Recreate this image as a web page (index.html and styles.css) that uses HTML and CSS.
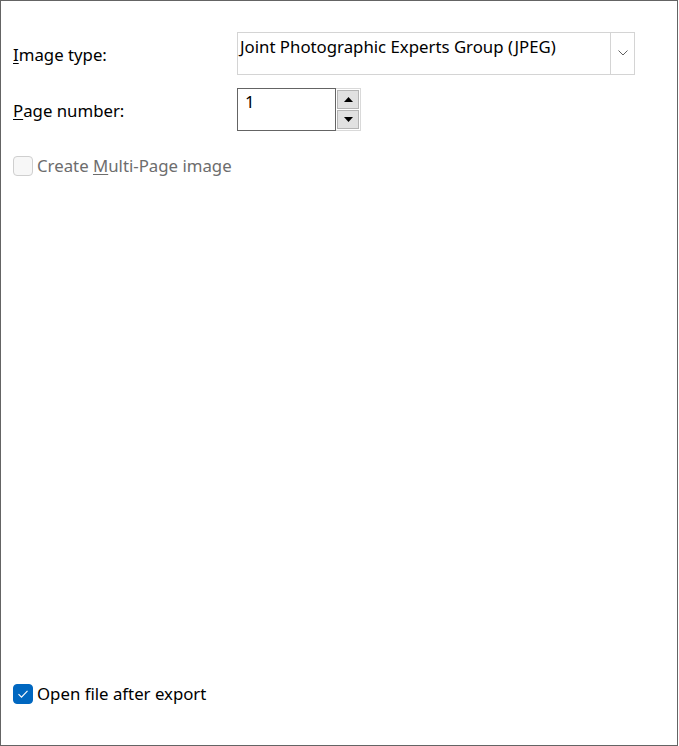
FILE: index.html
```
<!DOCTYPE html>
<html>
<head>
<meta charset="utf-8">
<link rel="stylesheet" href="styles.css">
</head>
<body>
<div class="dialog">
  <div class="form">
    <label class="lbl lbl-type"><u>I</u>mage type:</label>
    <div class="combo">
      <span class="combo-text">Joint Photographic Experts Group (JPEG)</span>
      <span class="combo-btn">
        <svg width="10" height="6" viewBox="0 0 10 6"><path d="M0.5 0.5 L5 5 L9.5 0.5" fill="none" stroke="#606060" stroke-width="1"/></svg>
      </span>
    </div>
    <label class="lbl lbl-page"><u>P</u>age number:</label>
    <div class="spin">
      <div class="spin-input">1</div>
      <div class="spin-btns">
        <div class="spin-btn"><svg width="9" height="5" viewBox="0 0 9 5"><path d="M0 5 L4.5 0 L9 5 Z" fill="#000"/></svg></div>
        <div class="spin-btn"><svg width="9" height="5" viewBox="0 0 9 5"><path d="M0 0 L4.5 5 L9 0 Z" fill="#000"/></svg></div>
      </div>
    </div>
  </div>
  <label class="check disabled"><span class="box"></span><span>Create <u>M</u>ulti-Page image</span></label>
  <div class="spacer"></div>
  <label class="check"><span class="box checked"><svg width="12" height="10" viewBox="0 0 12 10"><path d="M1.5 5.2 L4.5 8.2 L10.5 1.8" fill="none" stroke="#fff" stroke-width="1.1"/></svg></span><span>Open file after export</span></label>
</div>
</body>
</html>
```
FILE: styles.css
```
html, body {
  margin: 0;
  padding: 0;
  background: #fff;
}
body {
  font-family: "Noto Sans", "Open Sans", sans-serif;
  font-size: 16.8px;
  color: #000;
}
.dialog {
  box-sizing: border-box;
  width: 678px;
  height: 746px;
  border: 1px solid #646464;
  padding: 31px 0 0 12px;
  display: flex;
  flex-direction: column;
}
.form {
  display: grid;
  grid-template-columns: 224px 398px;
  grid-auto-rows: 43px;
  row-gap: 13px;
}
.lbl {
  line-height: 22px;
  padding-top: 12px;
}
.lbl u, .check u { text-decoration-thickness: 1px; text-underline-offset: 2px; }
.combo {
  box-sizing: border-box;
  display: flex;
  border: 1px solid #d4d4d4;
  background: #fff;
}
.combo-text {
  flex: 1;
  padding: 3px 0 0 2px;
  line-height: 22px;
  white-space: nowrap;
}
.combo-btn {
  box-sizing: border-box;
  width: 24px;
  border-left: 1px solid #d4d4d4;
  display: flex;
  align-items: center;
  justify-content: center;
  padding-bottom: 2px;
}
.spin {
  display: flex;
  width: 124px;
}
.spin-input {
  box-sizing: border-box;
  width: 99px;
  border: 1px solid #646464;
  padding: 2px 0 0 7px;
  line-height: 22px;
}
.spin-btns {
  box-sizing: border-box;
  width: 25px;
  border: 1px solid #d9d9d9;
  border-left: none;
  padding: 1px;
  display: flex;
  flex-direction: column;
  gap: 1px;
}
.spin-btn {
  flex: 1;
  box-sizing: border-box;
  background: #e1e1e1;
  border: 1px solid #b4b4b4;
  display: flex;
  align-items: center;
  justify-content: center;
}
.check {
  display: flex;
  align-items: center;
  gap: 4px;
  line-height: 20px;
}
.check.disabled {
  margin-top: 25px;
  color: #6d6d6d;
}
.box {
  box-sizing: border-box;
  width: 20px;
  height: 20px;
  border-radius: 4px;
  border: 1px solid #cfcfcf;
  background: #f7f7f7;
  display: flex;
  align-items: center;
  justify-content: center;
}
.box.checked {
  background: #0067c0;
  border-color: #0067c0;
}
.spacer { flex: 1; }
.check:last-child {
  margin-bottom: 41px;
}
```
